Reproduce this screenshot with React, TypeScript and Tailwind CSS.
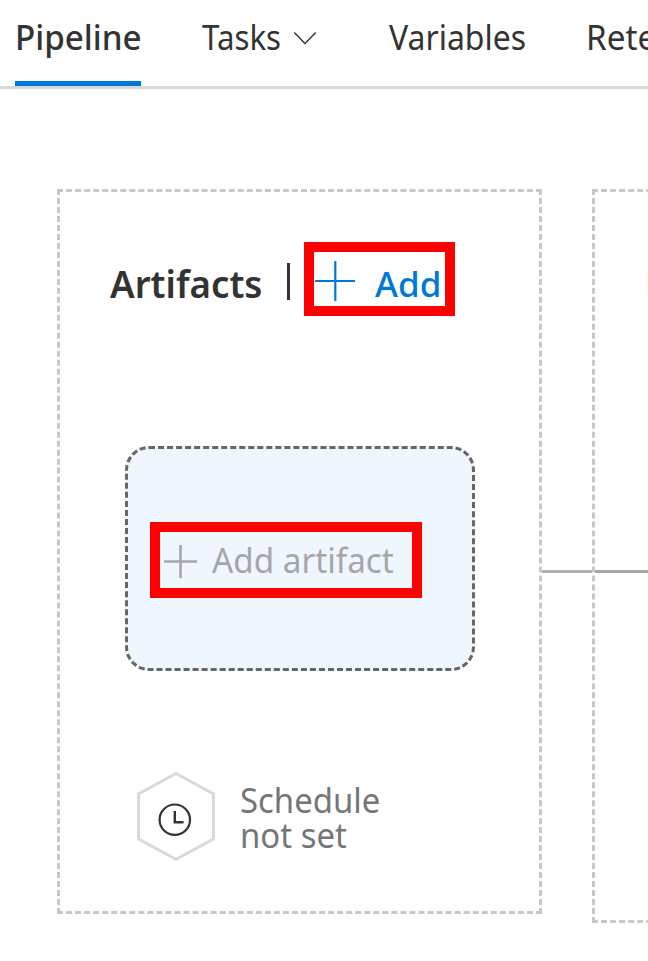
import type { ReactNode } from "react";

function Nav() {
  return (
    <nav className="flex h-[89px] w-[648px] overflow-hidden border-b-[3px] border-[#d9d9d9] text-[35px] leading-[74px] whitespace-nowrap">
      <div className="ml-[15px] h-[86px] w-[126px] border-b-[5px] border-[#0078d7] font-medium">
        <span className="inline-block origin-left scale-x-[0.948]">Pipeline</span>
      </div>
      <div className="ml-[61px] flex w-[115px]">
        <span className="w-[78px]">
          <span className="inline-block origin-left scale-x-[0.893]">Tasks</span>
        </span>
        <svg className="mt-[31px] ml-[13px] shrink-0" width="24" height="15" viewBox="0 0 24 15" fill="none" stroke="#333" strokeWidth="1.4">
          <path d="M1.3 1.5 12 12.5 22.7 1.5" />
        </svg>
      </div>
      <span className="ml-[72px] w-[137px] shrink-0">
        <span className="inline-block origin-left scale-x-[0.913]">Variables</span>
      </span>
      <span className="ml-[60px] shrink-0 origin-left scale-x-[0.95]">Retention</span>
    </nav>
  );
}

function Highlight({ className, children }: { className: string; children: ReactNode }) {
  return <div className={`flex shrink-0 border-[10px] border-[#ff0000] whitespace-nowrap ${className}`}>{children}</div>;
}

function ArtifactsPanel() {
  return (
    <section className="h-[725px] w-[485px] shrink-0 border-[3px] border-dashed border-[#c8c8c8]">
      <div className="mt-[50px] ml-[50px] flex h-[74px]">
        <h2 className="w-[177px] shrink-0 origin-left scale-x-[0.992] text-[37px] leading-[84px] font-semibold">Artifacts</h2>
        <div className="mt-[21px] h-[37px] w-[3px] shrink-0 bg-[#333]" />
        <Highlight className="ml-[14px] h-[74px] w-[151px] text-[#0078d7]">
          <svg className="mt-[9px] ml-px shrink-0" width="40" height="40" viewBox="0 0 40 40" stroke="#0078d7">
            <path d="M0 20H40M20.3 0V40" strokeWidth="2.2" />
          </svg>
          <span className="ml-[20px] text-[35px] leading-[63px] font-medium">Add</span>
        </Highlight>
      </div>
      <div className="mt-[130px] ml-[65px] h-[225px] w-[350px] rounded-[24px] border-[3px] border-dashed border-[#666] bg-[#eff6fd] pt-[73px] pl-[22px]">
        <Highlight className="h-[76px] w-[272px] text-[#a6a6a6]">
          <svg className="mt-[13px] ml-[4px] shrink-0" width="33" height="33" viewBox="0 0 33 33" stroke="#a6a6a6">
            <path d="M0 16.5H33M16.5 0V33" strokeWidth="2.6" />
          </svg>
          <span className="ml-[15px] origin-left scale-x-[0.95] text-[35px] leading-[56px]">Add artifact</span>
        </Highlight>
      </div>
      <div className="mt-[101px] ml-[77px] flex text-[#767676]">
        <svg className="shrink-0" width="78" height="89" viewBox="0 0 78 89" fill="none">
          <path d="M1.5 67V22L39 1.5 76.5 22V67L39 87.3Z" stroke="#dadada" strokeWidth="3" />
          <circle cx="37.8" cy="47.7" r="15.2" stroke="#333" strokeWidth="2.2" />
          <path d="M37.8 39V50.3H46.5" stroke="#333" strokeWidth="2.4" />
        </svg>
        <p className="mt-[10px] ml-[25px] origin-left scale-x-[0.94] text-[35px] leading-[35px]">
          Schedule
          <br />
          not set
        </p>
      </div>
    </section>
  );
}

export default function App() {
  return (
    <div className="h-[961px] w-[648px] overflow-hidden bg-white font-['Noto_Sans','Open_Sans',sans-serif] text-[#333]">
      <Nav />
      <main className="mt-[100px] flex w-[648px] overflow-hidden pl-[57px]">
        <ArtifactsPanel />
        <div className="mt-[381px] h-[3px] w-[50px] shrink-0 bg-[#b0b0b0]" />
        <section className="h-[734px] w-[485px] shrink-0 border-[3px] border-dashed border-[#c8c8c8]">
          <div className="mt-[78px] ml-[52px] h-[27px] w-px bg-[#ffffdc]" />
          <div className="mt-[273px] h-[3px] bg-[#a8a8a8]" />
        </section>
      </main>
    </div>
  );
}
